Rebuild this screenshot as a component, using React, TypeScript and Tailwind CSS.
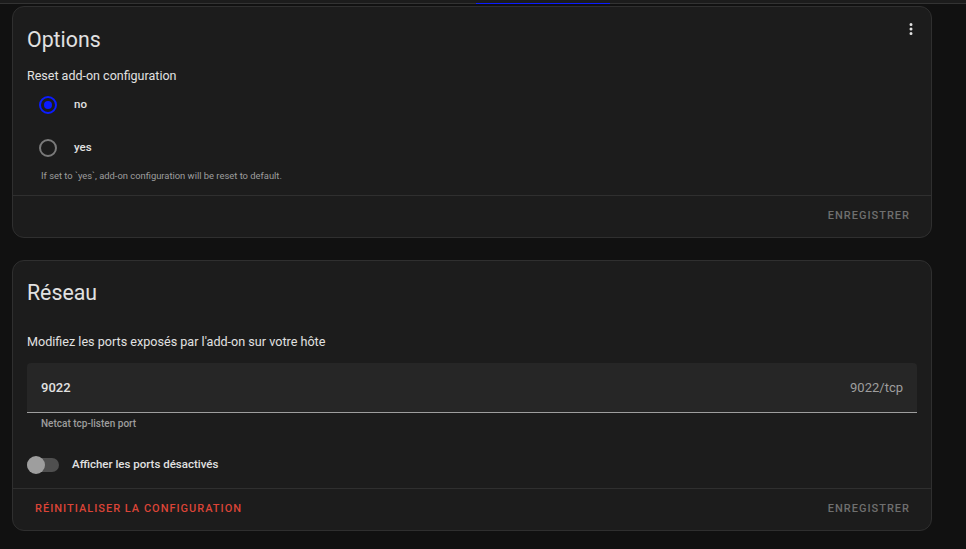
import React from "react";

const font = { fontFamily: "Roboto, 'Noto Sans', sans-serif" };

function DotsIcon() {
  return (
    <svg width="18" height="18" viewBox="0 0 24 24" className="text-[#e1e1e1]">
      <path
        fill="currentColor"
        d="M12,16A2,2 0 0,1 14,18A2,2 0 0,1 12,20A2,2 0 0,1 10,18A2,2 0 0,1 12,16M12,10A2,2 0 0,1 14,12A2,2 0 0,1 12,14A2,2 0 0,1 10,12A2,2 0 0,1 12,10M12,4A2,2 0 0,1 14,6A2,2 0 0,1 12,8A2,2 0 0,1 10,6A2,2 0 0,1 12,4Z"
      />
    </svg>
  );
}

function Radio({ checked, label }: { checked: boolean; label: string }) {
  return (
    <div className="flex h-[43px] items-center">
      <div className="flex w-[44px] justify-end">
        <div
          className={
            checked
              ? "flex h-[18px] w-[18px] items-center justify-center rounded-full border-2 border-[#0b1cff]"
              : "flex h-[18px] w-[18px] items-center justify-center rounded-full border-2 border-[#7a7a7a]"
          }
        >
          {checked && <div className="h-[8px] w-[8px] rounded-full bg-[#0b1cff]" />}
        </div>
      </div>
      <span className="ml-[17px] text-[11.5px] font-medium text-[#e1e1e1]">{label}</span>
    </div>
  );
}

export default function App() {
  return (
    <div className="min-h-[549px] w-full bg-[#111111]" style={font}>
      <div className="relative h-[4px] border-b border-[#333333] bg-[#1c1c1c]">
        <div className="absolute bottom-[-1px] left-[476px] h-[1px] w-[134px] bg-[#0b1cff]" />
      </div>
      <div className="flex w-[920px] flex-col gap-[22px] pl-[12px] pt-[2px]">
        {/* Options card */}
        <div className="relative flex h-[232px] w-[920px] flex-col rounded-[12px] border border-[#2f2f2f] bg-[#1c1c1c]">
          <div className="absolute right-[11px] top-[13px]">
            <DotsIcon />
          </div>
          <div className="pl-[14px] pt-[17px] text-[21.3px] leading-[32px] text-[#e1e1e1]">Options</div>
          <div className="mt-[10px] pl-[14px] text-[12.5px] leading-[20px] text-[#e1e1e1]">
            Reset add-on configuration
          </div>
          <div className="mt-[-3px] flex flex-col">
            <Radio checked label="no" />
            <Radio checked={false} label="yes" />
          </div>
          <div className="pl-[28px] text-[9.4px] leading-[14px] text-[#9e9e9e]">
            If set to `yes`, add-on configuration will be reset to default.
          </div>
          <div className="mt-auto flex h-[42px] items-center justify-end border-t border-[#2f2f2f] pr-[21px]">
            <span className="text-[11px] font-medium tracking-[1px] text-[#6f6f6f]">ENREGISTRER</span>
          </div>
        </div>

        {/* Réseau card */}
        <div className="flex h-[271px] w-[920px] flex-col rounded-[12px] border border-[#2f2f2f] bg-[#1c1c1c]">
          <div className="pl-[14px] pt-[16px] text-[21.3px] leading-[32px] text-[#e1e1e1]">Réseau</div>
          <div className="mt-[23px] pl-[14px] text-[12.6px] leading-[20px] text-[#e1e1e1]">
            Modifiez les ports exposés par l'add-on sur votre hôte
          </div>
          <div className="mx-[14px] mt-[11px] flex h-[50px] items-center justify-between rounded-t-[4px] border-b border-[#9e9e9e] bg-[#262626] pl-[14px] pr-[14px]">
            <span className="text-[13px] font-medium text-[#e1e1e1]">9022</span>
            <span className="text-[13px] text-[#9e9e9e]">9022/tcp</span>
          </div>
          <div className="mt-[4px] pl-[28px] text-[10px] font-medium leading-[14px] text-[#9e9e9e]">
            Netcat tcp-listen port
          </div>
          <div className="mt-[18px] flex h-[32px] items-center pl-[14px]">
            <div className="relative h-[14px] w-[32px]">
              <div className="absolute left-[0px] top-[0px] h-[14px] w-[32px] rounded-full bg-[#4f4f4f]" />
              <div className="absolute left-[0px] top-[-2px] h-[18px] w-[18px] rounded-full bg-[#9e9e9e]" />
            </div>
            <span className="ml-[13px] text-[11.5px] font-medium text-[#e1e1e1]">Afficher les ports désactivés</span>
          </div>
          <div className="mt-auto flex h-[42px] items-center justify-between border-t border-[#2f2f2f] pl-[22px] pr-[21px]">
            <span className="text-[11px] font-medium tracking-[1px] text-[#db4437]">RÉINITIALISER LA CONFIGURATION</span>
            <span className="text-[11px] font-medium tracking-[1px] text-[#6f6f6f]">ENREGISTRER</span>
          </div>
        </div>
      </div>
    </div>
  );
}
